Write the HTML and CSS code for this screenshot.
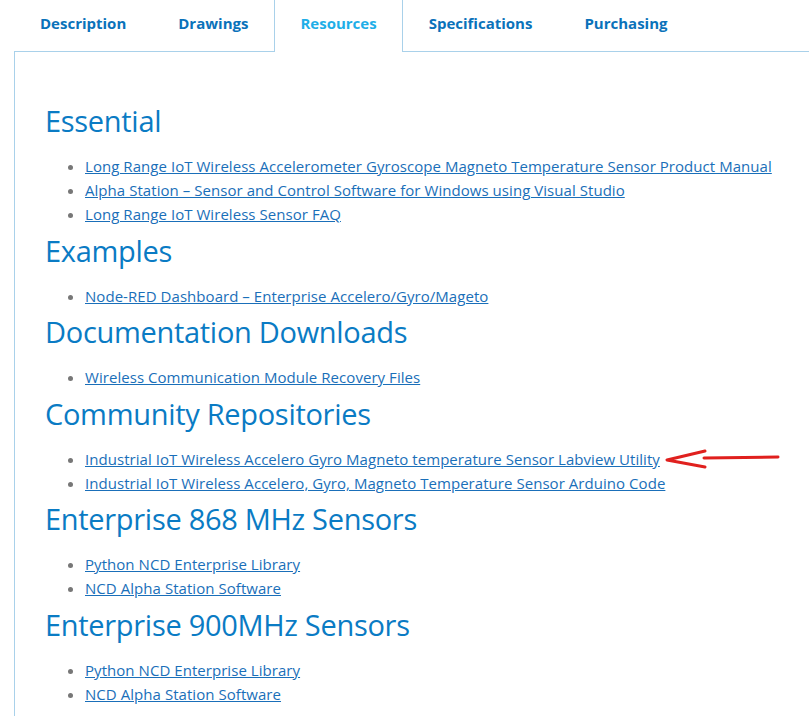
FILE: index.html
```html
<!DOCTYPE html>
<html>
<head>
<meta charset="utf-8">
<link rel="stylesheet" href="styles.css">
</head>
<body>
<div class="page">
  <nav class="tabs">
    <a class="tab">Description</a>
    <a class="tab">Drawings</a>
    <a class="tab active">Resources</a>
    <a class="tab">Specifications</a>
    <a class="tab">Purchasing</a>
  </nav>
  <div class="panel">
    <h2>Essential</h2>
    <ul>
      <li><a href="#">Long Range IoT Wireless Accelerometer Gyroscope Magneto Temperature Sensor Product Manual</a></li>
      <li><a href="#">Alpha Station – Sensor and Control Software for Windows using Visual Studio</a></li>
      <li><a href="#">Long Range IoT Wireless Sensor FAQ</a></li>
    </ul>
    <h2>Examples</h2>
    <ul>
      <li><a href="#">Node-RED Dashboard – Enterprise Accelero/Gyro/Mageto</a></li>
    </ul>
    <h2>Documentation Downloads</h2>
    <ul>
      <li><a href="#">Wireless Communication Module Recovery Files</a></li>
    </ul>
    <h2>Community Repositories</h2>
    <ul>
      <li class="marked"><a href="#">Industrial IoT Wireless Accelero Gyro Magneto temperature Sensor Labview Utility</a></li>
      <li><a href="#">Industrial IoT Wireless Accelero, Gyro, Magneto Temperature Sensor Arduino Code</a></li>
    </ul>
    <h2>Enterprise 868 MHz Sensors</h2>
    <ul>
      <li><a href="#">Python NCD Enterprise Library</a></li>
      <li><a href="#">NCD Alpha Station Software</a></li>
    </ul>
    <h2>Enterprise 900MHz Sensors</h2>
    <ul>
      <li><a href="#">Python NCD Enterprise Library</a></li>
      <li><a href="#">NCD Alpha Station Software</a></li>
    </ul>
  </div>
  <svg class="arrow" width="120" height="24" viewBox="0 0 120 24">
    <path d="M114 6 L40 7 M41 0 L3 9 L41 16" fill="none" stroke="#e0201e" stroke-width="3" stroke-linecap="round" stroke-linejoin="round"/>
  </svg>
</div>
</body>
</html>
```
FILE: styles.css
```css
html, body {
  margin: 0;
  padding: 0;
  background: #fff;
}
body {
  font-family: "Open Sans", "Noto Sans", sans-serif;
  overflow: hidden;
}
.page {
  position: relative;
  padding-left: 14px;
  height: 716px;
  overflow: hidden;
}
.tabs {
  display: flex;
  border-bottom: 1px solid #a9d1ea;
  height: 51px;
}
.tab {
  display: block;
  box-sizing: border-box;
  height: 52px;
  padding: 12px 25px 0;
  border: 1px solid transparent;
  border-top: 0;
  border-bottom: 0;
  font-size: 15px;
  line-height: 22px;
  font-weight: 700;
  color: #0a72ba;
  letter-spacing: 0;
  white-space: nowrap;
}
.tab.active {
  color: #1eaee8;
  background: #fff;
  border-left-color: #a9d1ea;
  border-right-color: #a9d1ea;
}
.panel {
  border-left: 1px solid #a9d1ea;
  padding: 51px 0 0 30px;
  height: 700px;
}
h2 {
  margin: 0 0 15px;
  font-size: 29px;
  line-height: 36px;
  font-weight: 400;
  color: #0a7bc4;
  letter-spacing: -0.3px;
}
ul {
  margin: 0 0 6.5px;
  padding-left: 40px;
  color: #777;
}
li {
  font-size: 15px;
  line-height: 24px;
  letter-spacing: 0.05px;
}
li a {
  color: #1a6fb9;
  text-decoration: underline;
}
.arrow {
  position: absolute;
  left: 664px;
  top: 451px;
  overflow: visible;
}
```
